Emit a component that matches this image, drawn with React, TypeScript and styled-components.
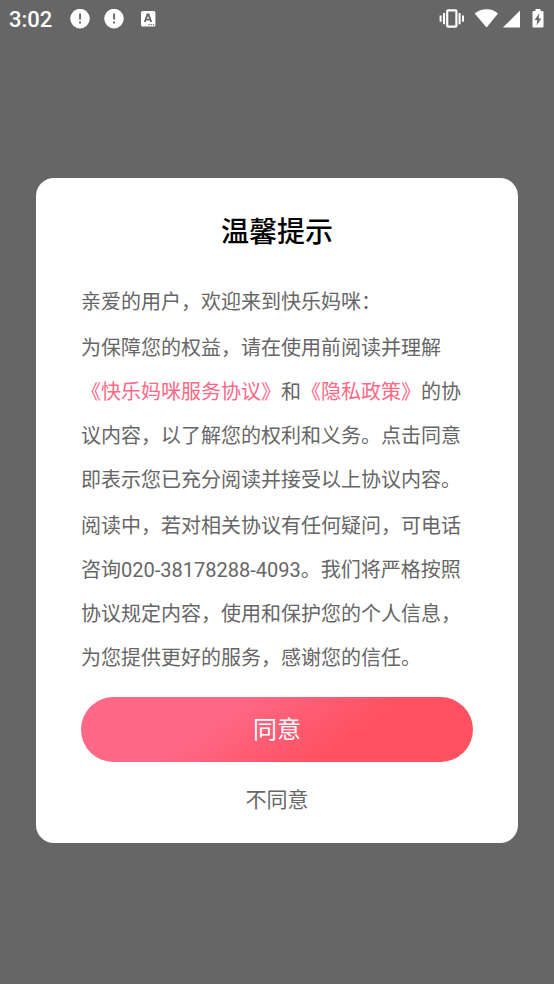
import React from "react";
import styled, { createGlobalStyle } from "styled-components";

const GlobalStyle = createGlobalStyle`
  * { box-sizing: border-box; }
  body { margin: 0; background: #666; font-family: Roboto, "Noto Sans CJK SC", sans-serif; }
`;

const Screen = styled.div`
  min-height: 100vh;
  display: flex;
  flex-direction: column;
  background: #666666;
`;

const StatusBar = styled.header`
  display: flex;
  align-items: center;
  justify-content: space-between;
  height: 38px;
  padding: 0 10px 0 9px;
  color: #fff;
`;

const StatusGroup = styled.div<{ $gap: number }>`
  display: flex;
  align-items: center;
  gap: ${(p) => p.$gap}px;
`;

const Clock = styled.time`
  font-size: 22px;
  font-weight: 500;
  line-height: 40px;
  padding-top: 2px;
  margin-right: 4px;
`;

const Stage = styled.main`
  flex: 1;
  display: flex;
  align-items: center;
  padding: 0 36px 1px;
`;

const Dialog = styled.section`
  width: 100%;
  padding: 33px 45px 26px;
  border-radius: 18px;
  background: #fff;
  display: flex;
  flex-direction: column;
`;

const Title = styled.h1`
  margin: 0 0 25px;
  font-size: 28px;
  line-height: 44px;
  font-weight: 500;
  text-align: center;
  color: #000;
`;

const Body = styled.div`
  display: flex;
  flex-direction: column;
  gap: 2px;
  font-size: 20px;
  line-height: 44px;
  color: #666;
`;

const Paragraph = styled.p`
  margin: 0;
`;

const PolicyLink = styled.a`
  color: #ff6886;
  text-decoration: none;
`;

const AgreeButton = styled.button`
  height: 65px;
  margin-top: 17px;
  padding: 0 0 4px;
  border: 0;
  border-radius: 33px;
  background: linear-gradient(145deg, #ff6886 34%, #ff5161 67%);
  color: #fff;
  font: inherit;
  font-size: 24px;
`;

const DeclineButton = styled.button`
  align-self: center;
  margin-top: 21px;
  padding: 0;
  border: 0;
  background: none;
  color: #666;
  font: inherit;
  font-size: 21px;
  line-height: 34px;
`;

const AlertIcon = () => (
  <svg width="20" height="20" viewBox="0 0 20 20" fill="#fff" aria-hidden="true">
    <circle cx="10" cy="9.6" r="9.8" />
    <path d="M9.1 4.600h1.900v6H9.100zM9.100 12.500h1.900v1.900H9.100z" fill="#666" />
  </svg>
);

const KeyboardIcon = () => (
  <svg width="20" height="20" viewBox="0 0 20 20" aria-hidden="true">
    <rect x="3" y="2" width="14.4" height="15.6" rx="1.5" fill="#fff" />
    <path d="M6.8 13 9.500 5.400h1L13.200 13M8 10.600h4.200" fill="none" stroke="#666" strokeWidth="1.9" />
    <path d="M10.500 15.600h1.200M12.700 15.600h1.200M14.900 15.600h1.200" stroke="#666" strokeWidth="1.1" />
  </svg>
);

const VibrateIcon = () => (
  <svg width="26" height="20" viewBox="0 0 26 20" fill="none" stroke="#fff" aria-hidden="true">
    <rect x="9.2" y="1.3" width="9.2" height="16.4" rx="1" strokeWidth="2.2" />
    <path d="M6 4v11.200M21.600 4v11.200" strokeWidth="2.1" />
    <path d="M2.600 6.500v6.200M25 6.500v6.200" strokeWidth="2" />
  </svg>
);

const WifiIcon = () => (
  <svg width="24" height="20" viewBox="0 0 24 20" fill="#fff" aria-hidden="true">
    <path d="M0.700 4.600C4 1.600 8 .2 12.600 .2S21 1.600 24 4.600L12.600 18.400Z" />
  </svg>
);

const SignalIcon = () => (
  <svg width="18" height="20" viewBox="0 0 18 20" fill="#fff" aria-hidden="true">
    <path d="M18 1.600v17H.8Z" />
  </svg>
);

const BatteryIcon = () => (
  <svg width="12" height="20" viewBox="0 0 12 20" aria-hidden="true">
    <path d="M3.5 0h5v2H10.500q1 0 1 1V17.500q0 1-1 1H1.500q-1 0-1-1V3q0-1 1-1H3.500Z" fill="#fff" />
    <path d="M7.400 4.300 2.600 11H5.300L4.600 16.500 9.400 9.600H6.700Z" fill="#666" />
  </svg>
);

const SystemIcons = styled(StatusGroup)`
  & > svg:first-child { margin-right: 6px; }
  & > svg:last-child { margin-left: 8px; }
`;

export default function App() {
  return (
    <>
      <GlobalStyle />
      <Screen>
        <StatusBar>
          <StatusGroup $gap={14}>
            <Clock>3:02</Clock>
            <AlertIcon />
            <AlertIcon />
            <KeyboardIcon />
          </StatusGroup>
          <SystemIcons $gap={4}>
            <VibrateIcon />
            <WifiIcon />
            <SignalIcon />
            <BatteryIcon />
          </SystemIcons>
        </StatusBar>
        <Stage>
          <Dialog role="dialog" aria-labelledby="title">
            <Title id="title">温馨提示</Title>
            <Body>
              <Paragraph>亲爱的用户，欢迎来到快乐妈咪：</Paragraph>
              <Paragraph>
                为保障您的权益，请在使用前阅读并理解
                <PolicyLink href="#service">《快乐妈咪服务协议》</PolicyLink>和
                <PolicyLink href="#privacy">《隐私政策》</PolicyLink>
                的协议内容，以了解您的权利和义务。点击同意即表示您已充分阅读并接受以上协议内容。
              </Paragraph>
              <Paragraph>
                阅读中，若对相关协议有任何疑问，可电话咨询020-38178288-4093。我们将严格按照协议规定内容，使用和保护您的个人信息，为您提供更好的服务，感谢您的信任。
              </Paragraph>
            </Body>
            <AgreeButton>同意</AgreeButton>
            <DeclineButton>不同意</DeclineButton>
          </Dialog>
        </Stage>
      </Screen>
    </>
  );
}
